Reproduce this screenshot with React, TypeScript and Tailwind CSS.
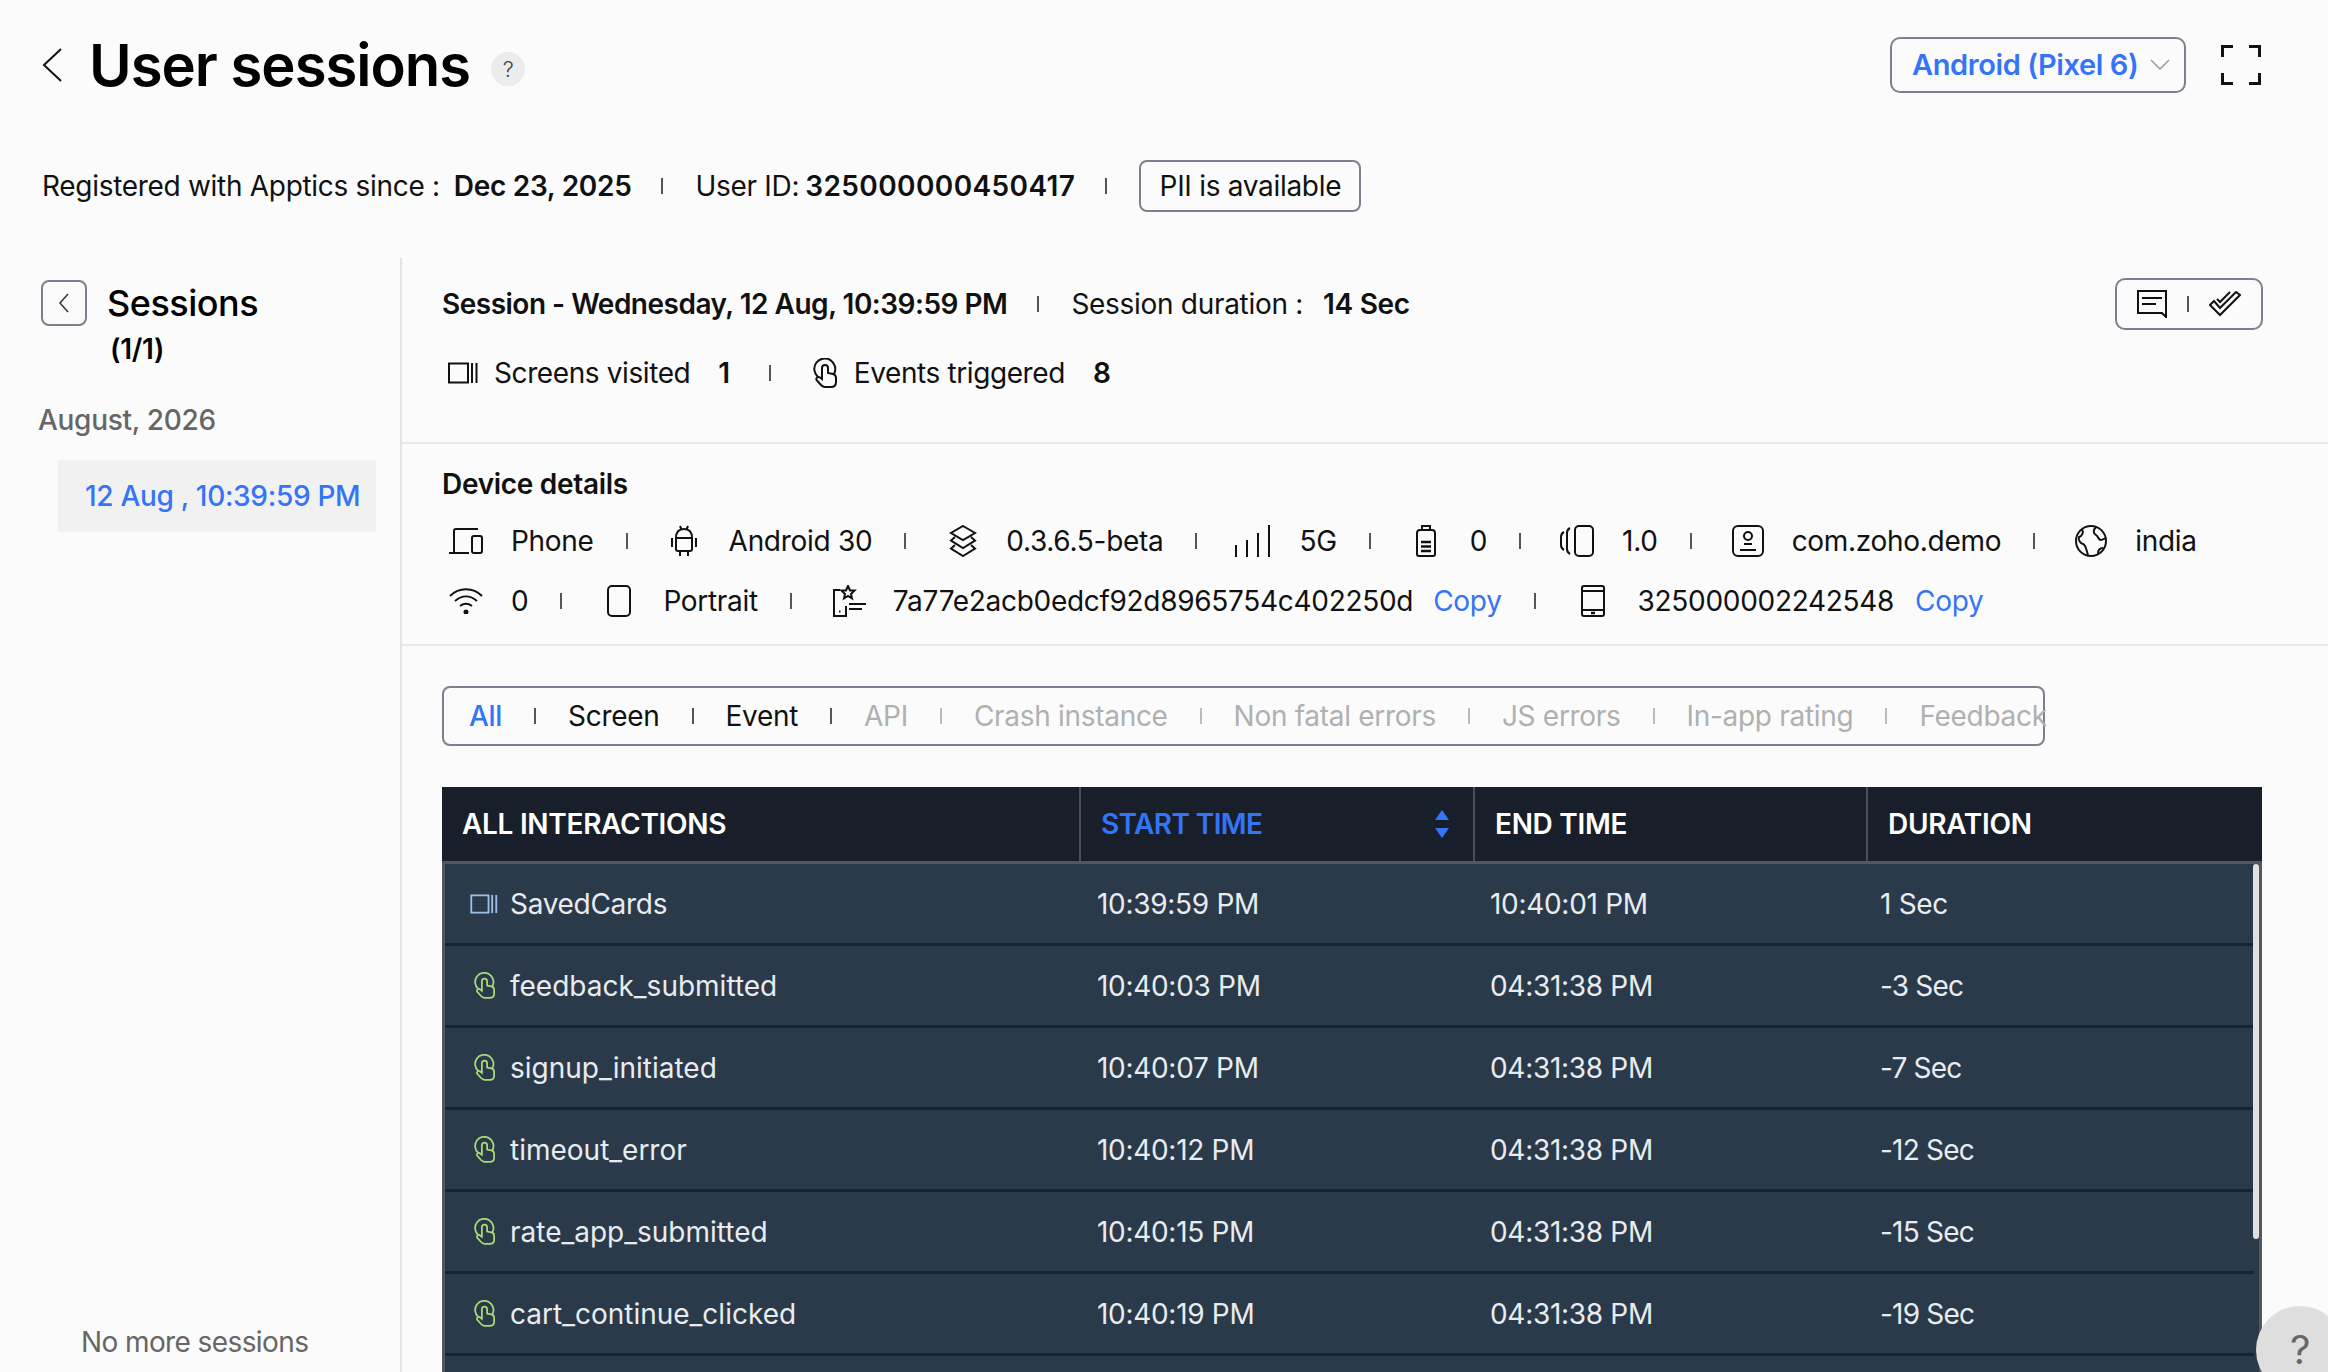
import React from 'react'

const stroke = { fill: 'none', stroke: 'currentColor', strokeWidth: 2 }

const ScreenIcon = ({ className = '' }: { className?: string }) => (
  <svg viewBox="0 0 30 22" className={className} {...stroke}>
    <rect x="1" y="1.5" width="19" height="19" />
    <path d="M24 1v20M28.500 1v20" />
  </svg>
)

const TapIcon = ({ className = '' }: { className?: string }) => (
  <svg viewBox="0 0 24 30" className={className} {...stroke}>
    <path d="M5 19A10.500 10.500 0 1 1 21 16" />
    <path d="M9 18V10A3 3 0 0 1 15 10V15L20 16C22 16.500 23 18 23 20V24C23 27 21 29 18 29H12C10 29 9 28 8 27L3.500 22C2.500 20 5 18 7 19.500L9 21V18" />
  </svg>
)

const Sep = ({ tone = 'bg-[#555]' }: { tone?: string }) => <span className={`h-[16px] w-[2px] shrink-0 ${tone}`} />

const DeviceIcons: Record<string, React.ReactNode> = {
  phone: (
    <svg viewBox="0 0 34 26" className="h-[26px] w-[34px]" {...stroke}>
      <path d="M5 24V3C5 2 6 1 7 1H29M0 25H20" />
      <rect x="23" y="8" width="10" height="17" rx="2" />
    </svg>
  ),
  android: (
    <svg viewBox="0 0 28 32" className="h-[32px] w-[28px]" {...stroke}>
      <path d="M6 13C6 7 9 4 14 4S22 7 22 13V24A2 2 0 0 1 20 26H8A2 2 0 0 1 6 24ZM6 13H22M10 1L11.500 4.500M18 1L16.500 4.500M10 26V31M18 26V31M2 13V22M26 13V22" />
    </svg>
  ),
  stack: (
    <svg viewBox="0 0 30 32" className="h-[32px] w-[30px]" {...stroke}>
      <path d="M15 1L27 8L15 15L3 8ZM7 12L3 15.500L15 23L27 15.500L23 12M7 20L3 23.500L15 31L27 23.500L23 20" />
    </svg>
  ),
  signal: (
    <svg viewBox="0 0 36 32" className="h-[32px] w-[36px]" {...stroke}>
      <path d="M1 32V20M12 32V15M23 32V8M34 32V0" />
    </svg>
  ),
  battery: (
    <svg viewBox="0 0 20 32" className="h-[32px] w-[20px]" {...stroke}>
      <path d="M6 5V1H14V5M4 5H16C18 5 19 6 19 8V29C19 30 18 31 17 31H3C2 31 1 30 1 29V8C1 6 2 5 4 5Z" />
      <path d="M5 17H15M5 21.500H15M5 26H15" strokeWidth="2.500" />
    </svg>
  ),
  rotate: (
    <svg viewBox="0 0 34 32" className="h-[32px] w-[34px]" {...stroke}>
      <rect x="15" y="1" width="18" height="30" rx="4" />
      <path d="M10 3C8 4 7 6 7 8V24C7 26 8 28 10 29M4 7C2 8 1 10 1 12V20C1 22 2 24 4 25" />
    </svg>
  ),
  app: (
    <svg viewBox="0 0 32 32" className="h-[32px] w-[32px]" {...stroke}>
      <rect x="1" y="1" width="30" height="30" rx="5" />
      <circle cx="16" cy="11" r="4" />
      <path d="M12 19H20M8 25H24" />
    </svg>
  ),
  globe: (
    <svg viewBox="0 0 32 32" className="h-[32px] w-[32px]" {...stroke}>
      <circle cx="16" cy="16" r="15" />
      <path d="M7 4C9 8 7 11 4 12C3 15 5 18 8 19C11 20 11 24 13 30M21 2C18 5 18 8 21 10C24 12 23 15 26 15C28 15 30 13 31 13M23 29C23 25 25 23 28 23" />
    </svg>
  ),
  wifi: (
    <svg viewBox="0 0 34 26" className="h-[26px] w-[34px]" {...stroke}>
      <path d="M1 8C10 -1 24 -1 33 8M6 13C13 7 21 7 28 13M11 18C15 15 19 15 23 18" />
      <circle cx="17" cy="24" r="1.500" fill="currentColor" />
    </svg>
  ),
  portrait: (
    <svg viewBox="0 0 24 32" className="h-[32px] w-[24px]" {...stroke}>
      <rect x="1" y="1" width="22" height="30" rx="4" />
    </svg>
  ),
  install: (
    <svg viewBox="0 0 34 32" className="h-[32px] w-[34px]" {...stroke}>
      <path d="M8 5H2V31H14V21" />
      <path d="M7 26.500H8.500" />
      <path d="M16 1L18 5.500H22.500L19 9L20 13.500L16 11L12 13.500L13 9L9.500 5.500H14Z" />
      <path d="M17 19H34M17 24H30" />
    </svg>
  ),
  device: (
    <svg viewBox="0 0 24 32" className="h-[32px] w-[24px]" {...stroke}>
      <rect x="1" y="1" width="22" height="30" rx="2" />
      <path d="M1 6H23M1 25H23" />
      <path d="M10 28H14" strokeWidth="2.500" />
    </svg>
  ),
}

const Detail = ({ icon, gap = 'gap-[28px]', children }: { icon: string; gap?: string; children: React.ReactNode }) => (
  <div className={`flex items-center ${gap}`}>
    {DeviceIcons[icon]}
    <span className="whitespace-nowrap">{children}</span>
  </div>
)

const tabs = [
  { label: 'All', tone: 'text-[#3474f6] font-medium' },
  { label: 'Screen', tone: 'text-[#111]' },
  { label: 'Event', tone: 'text-[#111]' },
  { label: 'API', tone: 'text-[#b0b0b0]' },
  { label: 'Crash instance', tone: 'text-[#b0b0b0]' },
  { label: 'Non fatal errors', tone: 'text-[#b0b0b0]' },
  { label: 'JS errors', tone: 'text-[#b0b0b0]' },
  { label: 'In-app rating', tone: 'text-[#b0b0b0]' },
  { label: 'Feedback', tone: 'text-[#b0b0b0]' },
]

const rows = [
  { name: 'SavedCards', start: '10:39:59 PM', end: '10:40:01 PM', duration: '1 Sec', screen: true },
  { name: 'feedback_submitted', start: '10:40:03 PM', end: '04:31:38 PM', duration: '-3 Sec' },
  { name: 'signup_initiated', start: '10:40:07 PM', end: '04:31:38 PM', duration: '-7 Sec' },
  { name: 'timeout_error', start: '10:40:12 PM', end: '04:31:38 PM', duration: '-12 Sec' },
  { name: 'rate_app_submitted', start: '10:40:15 PM', end: '04:31:38 PM', duration: '-15 Sec' },
  { name: 'cart_continue_clicked', start: '10:40:19 PM', end: '04:31:38 PM', duration: '-19 Sec' },
]

export default function App() {
  return (
    <div className="relative flex h-[1372px] w-[2328px] flex-col overflow-hidden bg-[#fbfbfb] font-['Inter',sans-serif] text-[28px] tracking-[-0.3px] text-[#111]">
      <header className="flex h-[130px] shrink-0 items-center justify-between pl-[42px] pr-[67px]">
        <div className="flex items-center">
          <svg viewBox="0 0 20 34" className="h-[34px] w-[20px]" fill="none" stroke="#111" strokeWidth="2">
            <path d="M19 1L2 17L19 33" />
          </svg>
          <h1 className="ml-[27px] text-[58px] font-semibold leading-none tracking-[-1px] text-black">User sessions</h1>
          <span className="ml-[21px] mt-[8px] flex h-[34px] w-[34px] items-center justify-center rounded-full bg-[#ececec] text-[22px] font-light text-[#444]">?</span>
        </div>
        <div className="flex items-center gap-[35px]">
          <button className="flex h-[56px] w-[296px] items-center justify-between rounded-[10px] border-2 border-[#7b808c] pl-[20px] pr-[14px] text-[29px] font-semibold tracking-[-0.4px] text-[#3474f6]">
            Android (Pixel 6)
            <svg viewBox="0 0 20 12" className="h-[12px] w-[20px]" fill="none" stroke="#999" strokeWidth="1.500">
              <path d="M1 1L10 10L19 1" />
            </svg>
          </button>
          <svg viewBox="0 0 40 40" className="h-[40px] w-[40px]" fill="none" stroke="#111" strokeWidth="3">
            <path d="M1.500 12V1.500H12M28 1.500H38.500V12M38.500 28V38.500H28M12 38.500H1.500V28" />
          </svg>
        </div>
      </header>

      <div className="mt-[30px] flex h-[52px] shrink-0 items-center pl-[42px]">
        <span>Registered with Apptics since :</span>
        <span className="ml-[14px] font-semibold">Dec 23, 2025</span>
        <Sep tone="bg-[#555] ml-[30px]" />
        <span className="ml-[32px]">User ID:</span>
        <span className="ml-[6px] font-semibold tracking-[0.4px]">325000000450417</span>
        <Sep tone="bg-[#555] ml-[30px]" />
        <span className="ml-[32px] flex h-[52px] w-[222px] items-center justify-center rounded-[8px] border-2 border-[#7b808c]">PII is available</span>
      </div>

      <div className="mt-[46px] flex min-h-0 flex-1">
        <aside className="flex w-[402px] shrink-0 flex-col border-r-2 border-[#e4e4e4]">
          <div className="flex pl-[41px] pt-[22px]">
            <button className="flex h-[46px] w-[46px] items-center justify-center rounded-[8px] border-2 border-[#7b808c]">
              <svg viewBox="0 0 12 20" className="h-[20px] w-[12px]" fill="none" stroke="#333" strokeWidth="1.500">
                <path d="M10 1L2 10L10 19" />
              </svg>
            </button>
            <div className="ml-[20px]">
              <div className="text-[36px] font-medium leading-[46px] tracking-[-0.5px] text-black">Sessions</div>
              <div className="ml-[3px] mt-[1px] text-[28px] font-semibold leading-[44px] text-black">(1/1)</div>
            </div>
          </div>
          <div className="ml-[38px] mt-[27px] font-medium leading-[44px] text-[#666]">August, 2026</div>
          <div className="ml-[58px] mt-[18px] flex h-[72px] w-[318px] items-center whitespace-nowrap bg-[#f1f1f1] pl-[27px] font-medium text-[#3474f6]">12 Aug , 10:39:59 PM</div>
          <div className="mt-auto pb-[9px] pl-[81px] tracking-[-0.6px] text-[#666]">No more sessions</div>
        </aside>

        <main className="flex min-w-0 flex-1 flex-col">
          <section className="flex h-[186px] shrink-0 flex-col border-b-2 border-[#e8e8e8] pl-[40px] pr-[65px] pt-[20px]">
            <div className="flex h-[52px] items-center">
              <span className="font-semibold tracking-[-0.5px]">Session - Wednesday, 12 Aug, 10:39:59 PM</span>
              <Sep tone="bg-[#555] ml-[30px]" />
              <span className="ml-[32px]">Session duration :</span>
              <span className="ml-[20px] font-semibold">14 Sec</span>
              <div className="ml-auto flex h-[52px] w-[148px] items-center justify-center gap-[20px] rounded-[10px] border-2 border-[#7b808c]">
                <svg viewBox="0 0 30 28" className="h-[28px] w-[30px]" fill="none" stroke="#111" strokeWidth="2">
                  <path d="M1 1H29V27L25 23H1ZM5 8H25M5 14H19" />
                </svg>
                <Sep />
                <svg viewBox="0 0 32 26" className="h-[26px] w-[32px]" fill="none" stroke="#111" strokeWidth="2">
                  <path d="M1 14L11 24L31 4L27 1L11 17L5 10ZM8 8L11 11L21 1" />
                </svg>
              </div>
            </div>
            <div className="mt-[21px] flex h-[44px] items-center pl-[6px] tracking-[-0.4px]">
              <ScreenIcon className="h-[22px] w-[30px] text-[#111]" />
              <span className="ml-[16px]">Screens visited</span>
              <span className="ml-[28px] font-semibold">1</span>
              <Sep tone="bg-[#555] ml-[39px]" />
              <TapIcon className="ml-[42px] h-[30px] w-[24px] text-[#111]" />
              <span className="ml-[17px]">Events triggered</span>
              <span className="ml-[28px] font-semibold">8</span>
            </div>
          </section>

          <section className="h-[202px] shrink-0 border-b-2 border-[#e8e8e8] pl-[40px] pt-[19px]">
            <div className="font-semibold leading-[42px]">Device details</div>
            <div className="mt-[14px] flex h-[44px] items-center pl-[7px]">
              <Detail icon="phone">Phone</Detail>
              <Sep tone="bg-[#555] mx-[32px]" />
              <span className="ml-[10px]"><Detail icon="android" gap="gap-[31px]">Android 30</Detail></span>
              <Sep tone="bg-[#555] mx-[32px]" />
              <span className="ml-[10px]"><Detail icon="stack">0.3.6.5-beta</Detail></span>
              <Sep tone="bg-[#555] mx-[32px]" />
              <span className="ml-[6px]"><Detail icon="signal">5G</Detail></span>
              <Sep tone="bg-[#555] mx-[32px]" />
              <span className="ml-[13px]"><Detail icon="battery" gap="gap-[34px]">0</Detail></span>
              <Sep tone="bg-[#555] mx-[32px]" />
              <span className="ml-[7px]"><Detail icon="rotate">1.0</Detail></span>
              <Sep tone="bg-[#555] mx-[32px]" />
              <span className="ml-[8px]"><Detail icon="app">com.zoho.demo</Detail></span>
              <Sep tone="bg-[#555] mx-[32px]" />
              <span className="ml-[8px]"><Detail icon="globe">india</Detail></span>
            </div>
            <div className="mt-[16px] flex h-[44px] items-center pl-[7px]">
              <Detail icon="wifi">0</Detail>
              <Sep tone="bg-[#555] mx-[32px]" />
              <span className="ml-[13px]"><Detail icon="portrait" gap="gap-[32px]">Portrait</Detail></span>
              <Sep tone="bg-[#555] mx-[32px]" />
              <div className="ml-[8px] flex items-center gap-[27px]">
                {DeviceIcons.install}
                <span className="whitespace-nowrap">
                  7a77e2acb0edcf92d8965754c402250d
                  <span className="ml-[20px] text-[#3474f6]">Copy</span>
                </span>
              </div>
              <Sep tone="bg-[#555] mx-[32px]" />
              <div className="ml-[13px] flex items-center gap-[33px]">
                {DeviceIcons.device}
                <span className="whitespace-nowrap">
                  325000002242548
                  <span className="ml-[21px] text-[#3474f6]">Copy</span>
                </span>
              </div>
            </div>
          </section>

          <div className="ml-[40px] mt-[40px] flex h-[60px] w-[1603px] shrink-0 items-center gap-[32px] self-start whitespace-nowrap rounded-[8px] border-2 border-[#7b808c] pl-[25px]">
            {tabs.map((tab, i) => (
              <React.Fragment key={tab.label}>
                {i > 0 && <Sep tone={i > 3 ? 'bg-[#bbb]' : 'bg-[#555]'} />}
                <span className={tab.tone}>{tab.label}</span>
              </React.Fragment>
            ))}
          </div>

          <div className="ml-[40px] mr-[66px] mt-[41px] flex min-h-0 flex-1 flex-col bg-[#2b3a4a]">
            <div className="grid h-[77px] shrink-0 grid-cols-[637px_394px_393px_1fr] border-b-[3px] border-[#50575f] bg-[#181f2b] font-semibold text-white">
              <div className="flex items-center pl-[20px]">ALL INTERACTIONS</div>
              <div className="flex items-center justify-between border-l-2 border-[#4a4f57] pl-[20px] pr-[24px] tracking-[-0.6px] text-[#3474f6]">
                START TIME
                <svg viewBox="0 0 14 28" className="h-[28px] w-[14px]" fill="#3474f6">
                  <path d="M7 0L14 10H0ZM7 28L0 18H14Z" />
                </svg>
              </div>
              <div className="flex items-center border-l-2 border-[#4a4f57] pl-[20px]">END TIME</div>
              <div className="flex items-center border-l-2 border-[#4a4f57] pl-[20px]">DURATION</div>
            </div>
            <div className="relative flex-1 overflow-hidden border-x-[3px] border-[#50575f] text-[#e8ecef]">
              {rows.map(row => (
                <div key={row.name} className="mr-[5px] grid h-[82px] grid-cols-[634px_394px_393px_1fr] items-center border-b-[3px] border-[#13233a]">
                  <div className="flex items-center">
                    {row.screen ? (
                      <ScreenIcon className="ml-[25px] h-[20px] w-[28px] text-[#9cc0ea]" />
                    ) : (
                      <TapIcon className="ml-[29px] h-[27px] w-[21px] text-[#a8dc78]" />
                    )}
                    <span className={row.screen ? 'ml-[12px]' : 'ml-[15px] tracking-[0px]'}>{row.name}</span>
                  </div>
                  <div className="pl-[18px]">{row.start}</div>
                  <div className="pl-[17px]">{row.end}</div>
                  <div className={row.screen ? 'pl-[14px]' : 'pl-[14px] tracking-[-0.8px]'}>{row.duration}</div>
                </div>
              ))}
              <div className="absolute right-0 top-0 h-[375px] w-[6px] rounded-[3px] bg-[#e0e0e0]" />
            </div>
          </div>
        </main>
      </div>

      <div className="absolute left-[2256px] top-[1306px] h-[88px] w-[88px] rounded-full bg-[#dedede]" />
      <span className="absolute left-[2288px] top-[1330px] w-[24px] text-center text-[40px] leading-[40px] text-[#666]">?</span>
    </div>
  )
}
